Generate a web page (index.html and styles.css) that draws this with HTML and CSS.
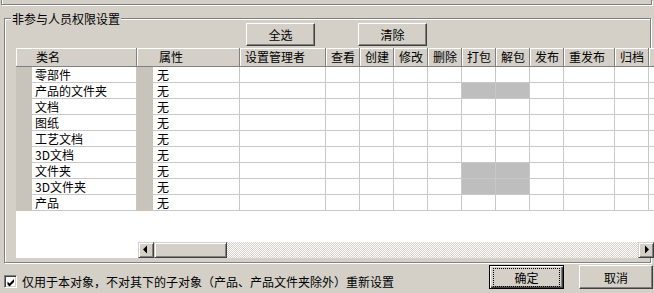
FILE: index.html
```html
<!DOCTYPE html>
<html lang="zh-CN">
<head>
  <meta charset="UTF-8" />
  <title>非参与人员权限设置</title>
  <link rel="stylesheet" href="styles.css">
</head>
<body>
  <div class="top-frame"></div>

  <div class="group">
    <span class="group-title">非参与人员权限设置</span>

    <div class="toolbar">
      <button class="btn btn-small">全选</button>
      <button class="btn btn-small">清除</button>
    </div>

    <div class="grid">
      <!-- partie fixe : nom de la classe -->
      <div class="pane pane-fixed">
        <div class="head-row">
          <div class="hcell h-name">类名</div>
        </div>
        <div class="row"><div class="stripe"></div><div class="cell c-name">零部件</div></div>
        <div class="row"><div class="stripe"></div><div class="cell c-name">产品的文件夹</div></div>
        <div class="row"><div class="stripe"></div><div class="cell c-name">文档</div></div>
        <div class="row"><div class="stripe"></div><div class="cell c-name">图纸</div></div>
        <div class="row"><div class="stripe"></div><div class="cell c-name">工艺文档</div></div>
        <div class="row"><div class="stripe"></div><div class="cell c-name">3D文档</div></div>
        <div class="row"><div class="stripe"></div><div class="cell c-name">文件夹</div></div>
        <div class="row"><div class="stripe"></div><div class="cell c-name">3D文件夹</div></div>
        <div class="row"><div class="stripe"></div><div class="cell c-name">产品</div></div>
      </div>

      <!-- partie défilante : droits -->
      <div class="pane pane-scroll">
        <div class="pane-body">
          <div class="head-row">
            <div class="hcell h-attr">属性</div>
            <div class="hcell c-admin">设置管理者</div>
            <div class="hcell c-op">查看</div>
            <div class="hcell c-op">创建</div>
            <div class="hcell c-op">修改</div>
            <div class="hcell c-op">删除</div>
            <div class="hcell c-op">打包</div>
            <div class="hcell c-op">解包</div>
            <div class="hcell c-op">发布</div>
            <div class="hcell c-wide">重发布</div>
            <div class="hcell c-op">归档</div>
            <div class="hcell c-more"></div>
          </div>
          <div class="row"><div class="stripe"></div><div class="cell c-attr">无</div><div class="cell c-admin"></div><div class="cell c-op"></div><div class="cell c-op"></div><div class="cell c-op"></div><div class="cell c-op"></div><div class="cell c-op"></div><div class="cell c-op"></div><div class="cell c-op"></div><div class="cell c-wide"></div><div class="cell c-op"></div><div class="cell c-more"></div></div>
          <div class="row"><div class="stripe"></div><div class="cell c-attr">无</div><div class="cell c-admin"></div><div class="cell c-op"></div><div class="cell c-op"></div><div class="cell c-op"></div><div class="cell c-op"></div><div class="cell c-op off"></div><div class="cell c-op off"></div><div class="cell c-op"></div><div class="cell c-wide"></div><div class="cell c-op"></div><div class="cell c-more"></div></div>
          <div class="row"><div class="stripe"></div><div class="cell c-attr">无</div><div class="cell c-admin"></div><div class="cell c-op"></div><div class="cell c-op"></div><div class="cell c-op"></div><div class="cell c-op"></div><div class="cell c-op"></div><div class="cell c-op"></div><div class="cell c-op"></div><div class="cell c-wide"></div><div class="cell c-op"></div><div class="cell c-more"></div></div>
          <div class="row"><div class="stripe"></div><div class="cell c-attr">无</div><div class="cell c-admin"></div><div class="cell c-op"></div><div class="cell c-op"></div><div class="cell c-op"></div><div class="cell c-op"></div><div class="cell c-op"></div><div class="cell c-op"></div><div class="cell c-op"></div><div class="cell c-wide"></div><div class="cell c-op"></div><div class="cell c-more"></div></div>
          <div class="row"><div class="stripe"></div><div class="cell c-attr">无</div><div class="cell c-admin"></div><div class="cell c-op"></div><div class="cell c-op"></div><div class="cell c-op"></div><div class="cell c-op"></div><div class="cell c-op"></div><div class="cell c-op"></div><div class="cell c-op"></div><div class="cell c-wide"></div><div class="cell c-op"></div><div class="cell c-more"></div></div>
          <div class="row"><div class="stripe"></div><div class="cell c-attr">无</div><div class="cell c-admin"></div><div class="cell c-op"></div><div class="cell c-op"></div><div class="cell c-op"></div><div class="cell c-op"></div><div class="cell c-op"></div><div class="cell c-op"></div><div class="cell c-op"></div><div class="cell c-wide"></div><div class="cell c-op"></div><div class="cell c-more"></div></div>
          <div class="row"><div class="stripe"></div><div class="cell c-attr">无</div><div class="cell c-admin"></div><div class="cell c-op"></div><div class="cell c-op"></div><div class="cell c-op"></div><div class="cell c-op"></div><div class="cell c-op off"></div><div class="cell c-op off"></div><div class="cell c-op"></div><div class="cell c-wide"></div><div class="cell c-op"></div><div class="cell c-more"></div></div>
          <div class="row"><div class="stripe"></div><div class="cell c-attr">无</div><div class="cell c-admin"></div><div class="cell c-op"></div><div class="cell c-op"></div><div class="cell c-op"></div><div class="cell c-op"></div><div class="cell c-op off"></div><div class="cell c-op off"></div><div class="cell c-op"></div><div class="cell c-wide"></div><div class="cell c-op"></div><div class="cell c-more"></div></div>
          <div class="row"><div class="stripe"></div><div class="cell c-attr">无</div><div class="cell c-admin"></div><div class="cell c-op"></div><div class="cell c-op"></div><div class="cell c-op"></div><div class="cell c-op"></div><div class="cell c-op"></div><div class="cell c-op"></div><div class="cell c-op"></div><div class="cell c-wide"></div><div class="cell c-op"></div><div class="cell c-more"></div></div>
        </div>

        <div class="hscroll">
          <div class="sb-btn">
            <svg width="14" height="14" viewBox="0 0 14 14"><polygon points="4,6.5 8,2.5 8,10.5" fill="#000"/></svg>
          </div>
          <div class="sb-thumb"></div>
          <div class="sb-track"></div>
          <div class="sb-btn">
            <svg width="14" height="14" viewBox="0 0 14 14"><polygon points="6,2.5 10,6.5 6,10.5" fill="#000"/></svg>
          </div>
        </div>
      </div>
    </div>
  </div>

  <div class="footer">
    <label class="check-label">
      <span class="checkbox">
        <svg width="9" height="9" viewBox="0 0 9 9"><polygon points="0.5,3.5 2.5,5.5 7,1 7,4 2.5,8.5 0.5,6.5" fill="#000"/></svg>
      </span>
      仅用于本对象，不对其下的子对象（产品、产品文件夹除外）重新设置
    </label>
    <div class="actions">
      <button class="btn btn-default">确定<span class="focus-ring"></span></button>
      <button class="btn btn-cancel">取消</button>
    </div>
  </div>
</body>
</html>
```

FILE: styles.css
```css
* {
  box-sizing: border-box;
}
body {
  margin: 0;
  width: 654px;
  height: 293px;
  overflow: hidden;
  background: #d4d0c8;
  font-family: "Noto Sans CJK SC", "Noto Sans", sans-serif;
  font-size: 12px;
  color: #000;
}
.top-frame {
  width: 651px;
  height: 5px;
  margin-left: 1px;
  border: 1px solid #808080;
  border-top: none;
  box-shadow: 1px 1px 0 #fff, inset 1px 0 0 #fff;
}
/* Group box */
.group {
  position: relative;
  width: 647px;
  height: 245px;
  margin: 13px 0 0 4px;
  padding: 4px 0 0 11px;
  border: 1px solid #808080;
  box-shadow: 1px 1px 0 #fff, inset 1px 1px 0 #fff;
}
.group-title {
  position: absolute;
  left: 6px;
  top: -7px;
  padding: 0 1px;
  line-height: 14px;
  background: #d4d0c8;
}
.toolbar {
  display: flex;
  gap: 43px;
  height: 23px;
  padding-left: 230px;
}
/* Buttons */
.btn {
  font: inherit;
  color: #000;
  padding: 0;
  background: #d4d0c8;
  border: 1px solid;
  border-color: #fff #404040 #404040 #fff;
  box-shadow: inset -1px -1px 0 #808080;
  cursor: pointer;
}
.btn-small {
  width: 69px;
  height: 23px;
  line-height: 20px;
}
/* Grid */
.grid {
  display: flex;
  width: 638px;
  height: 210px;
  margin-top: 2px;
}
.pane {
  background: #fff;
}
.pane-fixed {
  width: 121px;
}
.pane-scroll {
  width: 517px;
  display: flex;
  flex-direction: column;
}
.pane-body {
  flex: 1;
  overflow: hidden;
}
.head-row, .row {
  display: flex;
}
.head-row {
  height: 19px;
}
.row {
  height: 16px;
}
.hcell, .cell, .stripe {
  flex-shrink: 0;
  white-space: nowrap;
  overflow: hidden;
}
.hcell {
  height: 19px;
  padding-left: 5px;
  line-height: 18px;
  background: #d4d0c8;
  border-right: 1px solid #808080;
  border-bottom: 1px solid #808080;
  box-shadow: inset 1px 1px 0 #fff;
}
.h-name {
  width: 121px;
  padding-left: 20px;
}
.h-attr {
  width: 103px;
  padding-left: 22px;
}
.stripe {
  width: 16px;
  height: 16px;
  background: #c8c4bc;
}
.cell {
  height: 16px;
  padding-left: 3px;
  line-height: 15px;
  border-right: 1px solid #c8c8c8;
  border-bottom: 1px solid #c8c8c8;
}
.c-name {
  width: 105px;
}
.c-attr {
  width: 87px;
  padding-left: 4px;
}
.c-admin {
  width: 86px;
}
.c-op {
  width: 34px;
}
.c-wide {
  width: 51px;
}
.c-more {
  width: 60px;
}
.cell.off {
  background: #bebebe;
}
/* Horizontal scrollbar */
.hscroll {
  display: flex;
  height: 16px;
  margin-left: 1px;
}
.sb-btn, .sb-thumb {
  flex-shrink: 0;
  height: 16px;
  background: #d4d0c8;
  border: 1px solid;
  border-color: #d4d0c8 #404040 #404040 #d4d0c8;
  box-shadow: inset 1px 1px 0 #fff, inset -1px -1px 0 #808080;
}
.sb-btn {
  width: 16px;
}
.sb-btn svg {
  display: block;
}
.sb-thumb {
  width: 73px;
}
.sb-track {
  flex: 1;
  background: repeating-conic-gradient(#fff 0 25%, #d4d0c8 0 50%) 0 0 / 2px 2px;
}
/* Footer */
.footer {
  display: flex;
  align-items: flex-start;
  height: 24px;
  margin-top: 2px;
}
.check-label {
  display: flex;
  align-items: center;
  gap: 5px;
  margin: 10px 0 0 4px;
  line-height: 13px;
}
.checkbox {
  width: 13px;
  height: 13px;
  padding: 2px;
  background: #fff;
  border: 1px solid;
  border-color: #808080 #fff #fff #808080;
  box-shadow: inset 1px 1px 0 #404040, inset -1px -1px 0 #d4d0c8;
}
.checkbox svg {
  display: block;
}
.actions {
  display: flex;
  gap: 15px;
  margin-left: auto;
  padding-right: 1px;
}
.btn-default, .btn-cancel {
  height: 24px;
  padding-top: 2px;
  line-height: 18px;
}
.btn-default {
  position: relative;
  width: 75px;
  border: 1px solid #000;
  box-shadow: inset 1px 1px 0 #fff, inset -1px -1px 0 #404040, inset -2px -2px 0 #808080;
}
.btn-cancel {
  width: 74px;
}
.focus-ring {
  position: absolute;
  left: 3px;
  top: 2px;
  right: 3px;
  bottom: 1px;
  border: 1px dotted #000;
}
```
